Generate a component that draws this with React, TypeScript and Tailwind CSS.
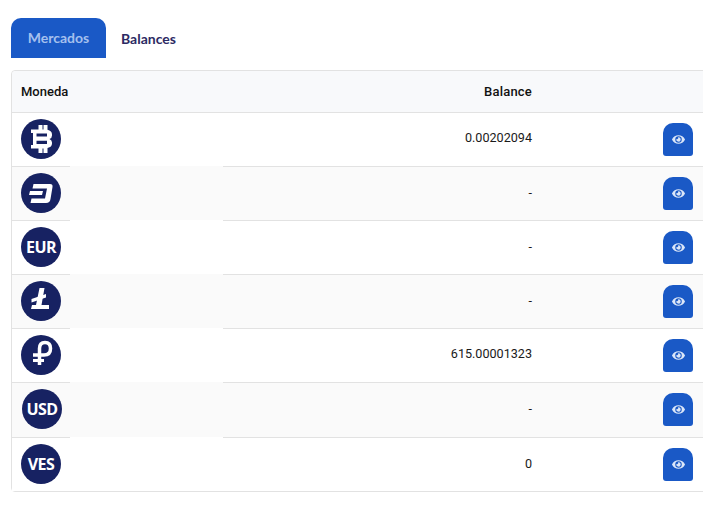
import React from 'react';
import { FaEye } from 'react-icons/fa';

const Coin: React.FC<{ label?: string; className?: string; children?: React.ReactNode }> = ({ label, className, children }) => (
  <div className={`w-10 h-10 mb-px rounded-full bg-[#172262] flex items-center justify-center text-white font-['Open_Sans',sans-serif] font-bold ${className ?? ''}`}>
    {label}
    {children}
  </div>
);

const BtcIcon = () => (
  <svg viewBox="0 0 40 40" className="w-10 h-10" fill="#fff" fillRule="evenodd">
    <path d="M10 10.500H17.500V6H21.500V10.500H22.500V6H26.500V10.800Q31 11.800 31 15.500V16.500Q31 19 28.500 20Q31 21 31 23.500V24.500Q31 28 26.500 29V34H22.500V29.500H21.500V34H17.500V29.500H10V26H12V14H10ZM15.500 14.500V17.500H26V14.500ZM15.500 21.700V25H26V21.700Z" />
  </svg>
);

const DashIcon = () => (
  <svg viewBox="0 0 40 40" className="w-10 h-10" fill="#fff">
    <path d="M12.500 11H29Q32 11 31.500 14L29.500 26Q29 30 25 30H9.500L10.500 25.500H24L26 15.500H11.500Z" />
    <path d="M9 18H22L21 22H8Z" />
  </svg>
);

const LtcIcon = () => (
  <svg viewBox="0 0 40 40" className="w-10 h-10" fill="#fff">
    <path d="M18.500 7H23.500L20.500 24H28V28H10L11 24H15Z" />
    <path d="M10.500 18L25 13V16.500L10.500 21.500Z" />
  </svg>
);

const PetroIcon = () => (
  <svg viewBox="0 0 40 40" className="w-10 h-10" fill="none" stroke="#fff" strokeWidth="3.500">
    <path d="M18.500 30V13.500Q18.500 7.500 24 7.500Q29.500 7.500 29.500 13.500Q29.500 20 23 20H12" />
    <path d="M12 25.500H23" strokeWidth="3" />
  </svg>
);

const rows = [
  { coin: <Coin><BtcIcon /></Coin>, balance: '0.00202094', h: 'h-[54px]', text: 'mb-[3px]' },
  { coin: <Coin><DashIcon /></Coin>, balance: '-', h: 'h-[54px]', text: 'mb-px' },
  { coin: <Coin label="EUR" className="text-[16px] tracking-[-0.5px]" />, balance: '-', h: 'h-[54px]', text: 'mb-px' },
  { coin: <Coin><LtcIcon /></Coin>, balance: '-', h: 'h-[54px]', text: 'mb-px' },
  { coin: <Coin><PetroIcon /></Coin>, balance: '615.00001323', h: 'h-[54px]', text: 'mb-[3px]' },
  { coin: <Coin label="USD" className="text-[16px] tracking-[-0.5px] ml-px" />, balance: '-', h: 'h-[55px] pb-px', text: 'mb-px' },
  { coin: <Coin label="VES" className="text-[16px] tracking-[-0.5px]" />, balance: '0', h: 'h-[53px]', text: 'mb-px' },
];

const App: React.FC = () => {
  return (
    <div className="w-[703px] h-[507px] overflow-hidden bg-white pt-[18px] pl-[11px] font-['Roboto',sans-serif]">
      <div className="flex items-stretch h-10 mb-3 font-['Lato',sans-serif] text-sm font-bold">
        <div className="w-[95px] bg-[#1a59c6] text-[#a5c0ee] rounded-t-[10px] flex justify-center pt-[11px] leading-[18px]">Mercados</div>
        <div className="ml-[15px] text-[#2c2a63] pt-3 leading-[18px]">Balances</div>
      </div>
      <div className="w-[720px] border border-[#e2e2e2] rounded-[4px] text-[12.6px] text-[#1a1a1a]">
        <div className="flex items-center h-[42px] bg-[#f8f9fb] border-b border-[#e2e2e2] rounded-t-[4px] font-medium text-[13px] text-[#111]">
          <div className="pl-[9px] w-[211px]">Moneda</div>
          <div className="w-[309px] text-right tracking-[0.2px]">Balance</div>
        </div>
        {rows.map((row, i) => (
          <div key={i} className={`flex items-center border-b last:border-b-0 border-[#e2e2e2] ${row.h} ${i % 2 === 1 ? 'bg-[#fafafa]' : 'bg-white'}`}>
            <div className="w-[58px] pl-[9px] shrink-0">{row.coin}</div>
            <div className={`w-[153px] shrink-0 self-stretch ${i === 0 ? '' : '-mt-px'} ${i % 2 === 1 ? 'bg-[#fafafa]' : 'bg-white'}`} />
            <div className={`w-[309px] shrink-0 text-right leading-4 ${row.text}`}>{row.balance}</div>
            <button className="ml-[131px] w-[30px] h-[33px] bg-[#1a59c6] rounded-t-[10px] rounded-b-[3px] flex items-center justify-center text-[#dbe6f8]">
              <FaEye className="w-[13px] h-[13px]" />
            </button>
          </div>
        ))}
      </div>
    </div>
  );
};

export default App;
